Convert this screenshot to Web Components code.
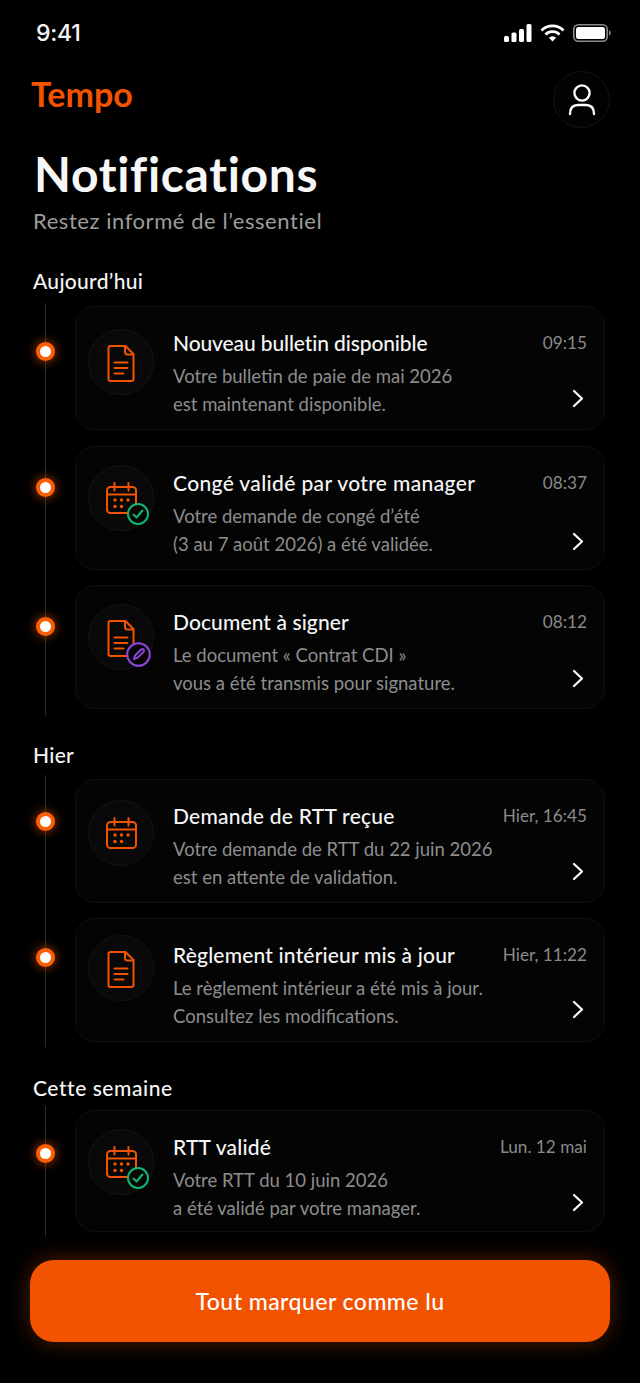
<!DOCTYPE html>
<html lang="fr">
<head>
<meta charset="utf-8">
<title>Notifications</title>
<style>
  html, body { margin: 0; background: #000; }
  body { font-family: Lato, "Noto Sans", sans-serif; color: #fff; width: 640px; height: 1383px; overflow: hidden; }
</style>
</head>
<body>
<tempo-page>
  <tempo-status></tempo-status>
  <tempo-header></tempo-header>

  <tempo-section label="Aujourd’hui" style="--label-top:32px;--label-gap:9px;--line-top:3px;--line-bottom:7px;--spacing:.3px">
    <tempo-notice icon="doc" time="09:15" style="--dot:45px;--icon:23px;--chev:37px;--after:16px">
      <span slot="title" style="letter-spacing:-.12px">Nouveau bulletin disponible</span>
      Votre bulletin de paie de mai 2026<br>est maintenant disponible.
    </tempo-notice>
    <tempo-notice icon="cal-ok" time="08:37" style="--dot:41px;--icon:19px;--chev:40px;--after:15px">
      <span slot="title" style="letter-spacing:.36px">Congé validé par votre manager</span>
      Votre demande de congé d’été<br>(3 au 7 août 2026) a été validée.
    </tempo-notice>
    <tempo-notice icon="doc-sign" time="08:12" style="--dot:41px;--icon:19px;--chev:38px;--after:0px">
      <span slot="title" style="letter-spacing:.1px">Document à signer</span>
      Le document « Contrat CDI »<br>vous a été transmis pour signature.
    </tempo-notice>
  </tempo-section>

  <tempo-section label="Hier" style="--label-top:26px;--label-gap:7px;--line-top:4px;--line-bottom:5px;--spacing:.3px">
    <tempo-notice icon="cal" time="Hier, 16:45" style="--dot:42px;--icon:21px;--chev:37px;--after:15px">
      <span slot="title" style="letter-spacing:.25px">Demande de RTT reçue</span>
      Votre demande de RTT du 22 juin 2026<br>est en attente de validation.
    </tempo-notice>
    <tempo-notice icon="doc" time="Hier, 11:22" style="--dot:39px;--icon:17px;--chev:36px;--after:0px">
      <span slot="title" style="letter-spacing:.18px">Règlement intérieur mis à jour</span>
      Le règlement intérieur a été mis à jour.<br>Consultez les modifications.
    </tempo-notice>
  </tempo-section>

  <tempo-section label="Cette semaine" style="--label-top:28px;--label-gap:5px;--line-top:4px;--line-bottom:5px;--spacing:.55px">
    <tempo-notice icon="cal-ok" time="Lun. 12 mai" style="--dot:43px;--icon:19px;--chev:37px;--after:0px;--card:122px">
      <span slot="title" style="letter-spacing:.2px">RTT validé</span>
      Votre RTT du 10 juin 2026<br>a été validé par votre manager.
    </tempo-notice>
  </tempo-section>

  <tempo-button>Tout marquer comme lu</tempo-button>
</tempo-page>

<script>
const ORANGE = '#f25300';

const docPath = `
  <path d="M3 1h15l8 8v25a2 2 0 0 1-2 2H3a2 2 0 0 1-2-2V3a2 2 0 0 1 2-2z"/>
  <path d="M17.500 1.500V7a2.500 2.500 0 0 0 2.500 2.500h5.500"/>
  <path d="M7 17.500h13M7 23h13M7 28.500h9"/>`;

const calPath = `
  <rect x="1" y="5" width="29" height="26" rx="3.500"/>
  <path d="M1 12.500h29M8.500 1v7.500M22.500 1v7.500"/>`;

const calDots = [[9, 18], [15.500, 18], [22, 18], [9, 24.500], [15.500, 24.500]]
    .map(([x, y]) => `<circle cx="${x}" cy="${y}" r="1.700"/>`).join('');

const icons = {
    doc: `<svg class="main" style="left:18px;top:15px" width="28" height="37" viewBox="0 0 27 37" fill="none" stroke="${ORANGE}" stroke-width="2" stroke-linejoin="round" stroke-linecap="round">${docPath}</svg>`,
    cal: `<svg class="main" style="left:17px;top:16px" width="31" height="32" viewBox="0 0 31 32" fill="none" stroke="${ORANGE}" stroke-width="2" stroke-linecap="round">${calPath}<g fill="${ORANGE}" stroke="none">${calDots}</g></svg>`,
    ok: `<svg class="badge" style="left:38px;top:37px" width="22" height="22" viewBox="0 0 22 22" fill="#050505" stroke="#12b76f" stroke-width="2" stroke-linecap="round" stroke-linejoin="round"><circle cx="11" cy="11" r="10"/><path d="M6.500 11.500l3 3 6-7" fill="none"/></svg>`,
    sign: `<svg class="badge" style="left:37px;top:37px" width="25" height="25" viewBox="0 0 25 25" fill="#050505" stroke="#8f45e0" stroke-width="2" stroke-linecap="round" stroke-linejoin="round"><circle cx="12.500" cy="12.500" r="11.300"/><path d="M8 17l1-3.500 6.200-6a1.700 1.700 0 0 1 2.400 2.400l-6.200 6z" fill="none"/></svg>`
};
icons['cal-ok'] = icons.cal + icons.ok;
icons['doc-sign'] = icons.doc + icons.sign;

customElements.define('tempo-page', class extends HTMLElement {
    constructor() {
        super();
        this.attachShadow({mode: 'open'}).innerHTML = `
            <style>
                :host { display: flex; flex-direction: column; width: 640px; height: 1383px; }
            </style>
            <slot></slot>`;
    }
});

customElements.define('tempo-status', class extends HTMLElement {
    constructor() {
        super();
        this.attachShadow({mode: 'open'}).innerHTML = `
            <style>
                :host { display: flex; align-items: center; justify-content: space-between; height: 34px; padding: 16px 29px 0 36px; }
                .time { font: 500 23px/34px Inter, sans-serif; letter-spacing: -.2px; color: #f4f4f4; }
                .icons { display: flex; align-items: center; gap: 8px; }
                svg { display: block; }
            </style>
            <span class="time">9:41</span>
            <div class="icons">
                <svg width="28" height="18" viewBox="0 0 28 18" fill="#fff">
                    <rect x="0" y="12" width="5" height="6" rx="1.500"/>
                    <rect x="7.500" y="8.500" width="5" height="9.500" rx="1.500"/>
                    <rect x="15" y="5" width="5" height="13" rx="1.500"/>
                    <rect x="22.500" y="0" width="5" height="18" rx="1.500"/>
                </svg>
                <svg width="25" height="18" viewBox="0 0 25 18" fill="none" stroke="#fff" stroke-width="2.800">
                    <path d="M1.500 6.500a15.500 15.500 0 0 1 22 0"/>
                    <path d="M5.500 10.500a10 10 0 0 1 14 0"/>
                    <path d="M12.500 17.500l-3.600-3.700a5 5 0 0 1 7.200 0z" fill="#fff" stroke="none"/>
                </svg>
                <svg width="38" height="18" viewBox="0 0 38 18" fill="none">
                    <rect x=".8" y=".8" width="33.400" height="16.400" rx="4.500" stroke="#8a8a8a" stroke-width="1.600"/>
                    <rect x="3" y="3" width="29" height="12" rx="2.500" fill="#fff"/>
                    <path d="M36 6.500c1 .3 1.800 1.200 1.800 2.500s-.8 2.200-1.800 2.500z" fill="#8a8a8a"/>
                </svg>
            </div>`;
    }
});

customElements.define('tempo-header', class extends HTMLElement {
    constructor() {
        super();
        this.attachShadow({mode: 'open'}).innerHTML = `
            <style>
                :host { display: block; padding: 0 30px 0 31px; }
                .top { display: flex; justify-content: space-between; align-items: flex-start; padding-top: 21px; height: 57px; }
                .logo { font-size: 34px; line-height: 46px; font-weight: 700; color: ${ORANGE}; }
                .avatar { width: 55px; height: 55px; border: 1px solid #141414; border-radius: 50%; display: grid; place-items: center; background: #020202; }
                h1 { margin: 17px 0 0 3px; font-size: 48px; line-height: 58px; font-weight: 700; color: #f7f7f7; letter-spacing: .66px; }
                p { margin: 3px 0 0 2px; font-size: 22px; line-height: 30px; color: #9c9c9c; letter-spacing: .56px; }
                svg { display: block; }
            </style>
            <div class="top">
                <span class="logo">Tempo</span>
                <div class="avatar">
                    <svg width="28" height="32" viewBox="0 0 28 32" fill="none" stroke="#fff" stroke-width="2.400" stroke-linecap="round">
                        <circle cx="14" cy="9" r="7.600"/>
                        <path d="M2 30c0-6 3-9 8-9h8c5 0 8 3 8 9"/>
                    </svg>
                </div>
            </div>
            <h1>Notifications</h1>
            <p>Restez informé de l’essentiel</p>`;
    }
});

customElements.define('tempo-section', class extends HTMLElement {
    constructor() {
        super();
        this.attachShadow({mode: 'open'}).innerHTML = `
            <style>
                :host { display: block; }
                .label { margin: var(--label-top, 0) 0 var(--label-gap) 33px; font-size: 21px; line-height: 26px; font-weight: 500; color: #f5f5f5; letter-spacing: var(--spacing); }
                .timeline { position: relative; display: flex; flex-direction: column; padding: var(--line-top) 0 var(--line-bottom); }
                .timeline::before { content: ""; position: absolute; left: 45px; top: 0; bottom: 0; width: 1px; background: #2b2b2b; }
            </style>
            <div class="label"></div>
            <div class="timeline"><slot></slot></div>`;
        this.shadowRoot.querySelector('.label').textContent = this.getAttribute('label');
    }
});

customElements.define('tempo-notice', class extends HTMLElement {
    constructor() {
        super();
        this.attachShadow({mode: 'open'}).innerHTML = `
            <style>
                :host { display: flex; align-items: flex-start; margin-bottom: var(--after, 0); }
                .dot { position: relative; flex: none; box-sizing: border-box; width: 19px; height: 19px; margin: calc(var(--dot) - 9.500px) 20px 0 36px; border-radius: 50%; background: #fff; border: 4px solid #fa5f05; box-shadow: 0 0 8px 2px rgba(242, 85, 0, .45); }
                .card { box-sizing: border-box; display: flex; width: 530px; height: var(--card, 124px); border: 1px solid #101010; border-radius: 20px; background: #040404; padding: 22px 17px 0 0; }
                .icon { position: relative; flex: none; box-sizing: border-box; width: 66px; height: 66px; margin: calc(var(--icon) - 23px) 19px 0 12px; border: 1px solid #141414; border-radius: 50%; background: #090909; }
                .icon svg { position: absolute; display: block; }
                .body { flex: 1; min-width: 0; }
                .head { display: flex; justify-content: space-between; align-items: center; height: 26px; margin-bottom: 7px; }
                .title { font-size: 21px; font-weight: 500; color: #f6f6f6; white-space: nowrap; }
                .time { font-size: 17.200px; color: #8a8a8a; white-space: nowrap; }
                .foot { display: flex; justify-content: space-between; align-items: flex-start; }
                .desc { font-size: 18.500px; line-height: 28px; color: #8d8d8d; white-space: nowrap; }
                .chev { display: block; flex: none; margin: calc(var(--chev) - 10px) 3px 0 0; }
            </style>
            <span class="dot"></span>
            <article class="card">
                <div class="icon"></div>
                <div class="body">
                    <div class="head"><span class="title"><slot name="title"></slot></span><span class="time"></span></div>
                    <div class="foot">
                        <div class="desc"><slot></slot></div>
                        <svg class="chev" width="12" height="19" viewBox="0 0 12 19" fill="none" stroke="#fff" stroke-width="2.200" stroke-linecap="round" stroke-linejoin="round"><path d="M2 2l8 7.500L2 17"/></svg>
                    </div>
                </div>
            </article>`;
        this.shadowRoot.querySelector('.icon').innerHTML = icons[this.getAttribute('icon')];
        this.shadowRoot.querySelector('.time').textContent = this.getAttribute('time');
    }
});

customElements.define('tempo-button', class extends HTMLElement {
    constructor() {
        super();
        this.attachShadow({mode: 'open'}).innerHTML = `
            <style>
                :host { display: flex; align-items: center; justify-content: center; box-sizing: border-box; width: 580px; height: 82px; margin: 23px 0 0 30px; border-radius: 24px; background: ${ORANGE}; color: #fff; font-size: 23px; font-weight: 500; letter-spacing: .46px; box-shadow: 0 0 22px rgba(242, 85, 0, .35); }
            </style>
            <slot></slot>`;
    }
});
</script>
</body>
</html>
